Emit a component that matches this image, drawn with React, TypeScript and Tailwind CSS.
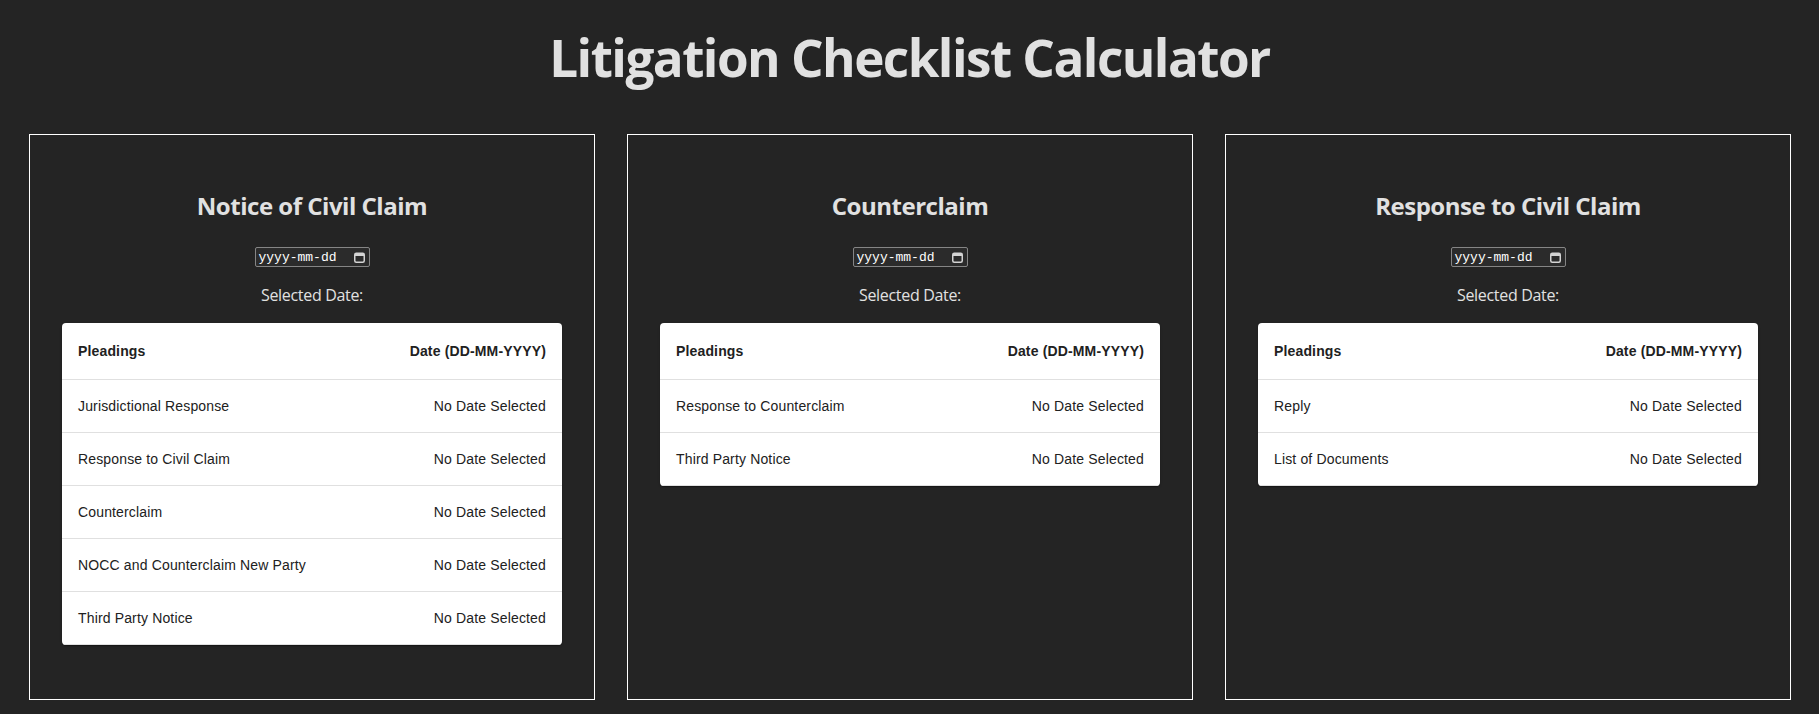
import React, { useState } from 'react';

type Checklist = {
  title: string;
  pleadings: string[];
};

const checklists: Checklist[] = [
  {
    title: 'Notice of Civil Claim',
    pleadings: [
      'Jurisdictional Response',
      'Response to Civil Claim',
      'Counterclaim',
      'NOCC and Counterclaim New Party',
      'Third Party Notice',
    ],
  },
  {
    title: 'Counterclaim',
    pleadings: ['Response to Counterclaim', 'Third Party Notice'],
  },
  {
    title: 'Response to Civil Claim',
    pleadings: ['Reply', 'List of Documents'],
  },
];

function DateField({
  value,
  onChange,
}: {
  value: string;
  onChange: (v: string) => void;
}) {
  return (
    <label className="relative mt-1 mb-px flex h-5 w-[115px] items-center justify-between rounded-[2px] border border-[#858585] bg-[#2b2b2b] pr-[4px] pl-[3px]">
      <span className="font-['Liberation_Mono',monospace] text-[13px] leading-none text-white">
        {value || 'yyyy-mm-dd'}
      </span>
      <svg width="11" height="11" viewBox="0 0 11 11" aria-hidden>
        <rect
          x="0.75"
          y="1.25"
          width="9.5"
          height="9"
          rx="1.5"
          fill="none"
          stroke="#d4d4d4"
          strokeWidth="1.5"
        />
        <rect x="1" y="1.5" width="9" height="2.5" fill="#d4d4d4" />
      </svg>
      <input
        type="date"
        value={value}
        onChange={(e) => onChange(e.target.value)}
        className="absolute inset-0 opacity-0"
      />
    </label>
  );
}

function ChecklistCard({ title, pleadings }: Checklist) {
  const [date, setDate] = useState('');

  return (
    <div className="flex aspect-square flex-1 flex-col items-center border border-white px-8 pt-8">
      <h2 className="mt-[21px] mb-[19px] text-2xl leading-9 font-bold tracking-[-0.02em]">
        {title}
      </h2>
      <DateField value={date} onChange={setDate} />
      <p className="mt-[15px] mb-4 leading-6 tracking-[-0.02em]">
        Selected Date: {date}
      </p>
      <div className="w-full overflow-hidden rounded bg-white shadow-[0_2px_1px_-1px_rgba(0,0,0,0.2),0_1px_1px_0_rgba(0,0,0,0.14),0_1px_3px_0_rgba(0,0,0,0.12)]">
        <table className="w-full border-collapse font-['Liberation_Sans',Arial,sans-serif] text-sm tracking-[0.15px] text-[#212121]">
          <thead>
            <tr>
              <th className="border-b border-[#e0e0e0] p-4 text-left leading-6 font-bold">
                Pleadings
              </th>
              <th className="border-b border-[#e0e0e0] p-4 text-right leading-6 font-bold">
                Date (DD-MM-YYYY)
              </th>
            </tr>
          </thead>
          <tbody>
            {pleadings.map((name) => (
              <tr key={name}>
                <td className="border-b border-[#e0e0e0] p-4 text-left leading-5">
                  {name}
                </td>
                <td className="border-b border-[#e0e0e0] p-4 text-right leading-5">
                  No Date Selected
                </td>
              </tr>
            ))}
          </tbody>
        </table>
      </div>
    </div>
  );
}

export default function App() {
  return (
    <div className="min-h-screen bg-[#242424] font-['Open_Sans','Noto_Sans',sans-serif] text-[#e1e1e1]">
      <h1 className="pt-[29px] text-center text-[51.2px] leading-[1.1] font-bold tracking-[-0.03em]">
        Litigation Checklist Calculator
      </h1>
      <div className="mt-[49px] flex items-start gap-8 pr-[28px] pl-[29px]">
        {checklists.map((c) => (
          <ChecklistCard key={c.title} {...c} />
        ))}
      </div>
    </div>
  );
}
